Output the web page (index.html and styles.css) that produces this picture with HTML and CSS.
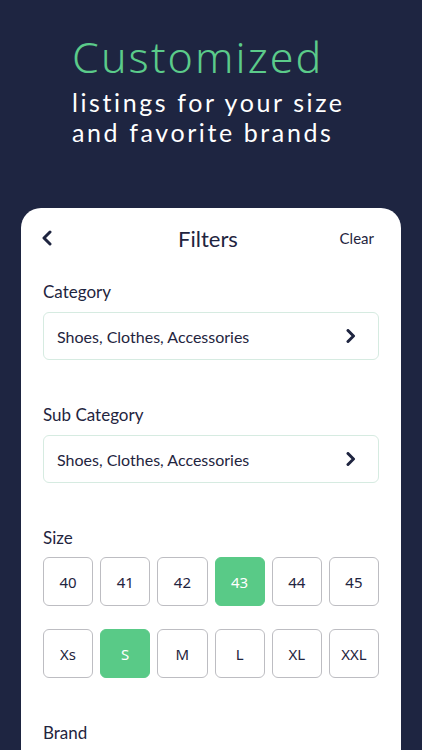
FILE: index.html
```html
<!DOCTYPE html>
<html lang="en">
<head>
<meta charset="utf-8">
<title>Filters</title>
<link rel="stylesheet" href="styles.css">
</head>
<body>
<header class="hero">
  <h1 class="hero-title">Customized</h1>
  <p class="hero-sub"><span class="line">listings for your size</span><span class="line">and favorite brands</span></p>
</header>
<main class="card">
  <div class="topbar">
    <span class="back"><svg width="12" height="16" viewBox="0 0 12 16"><path d="M9 2 L3 8 L9 14" fill="none" stroke="#1f2540" stroke-width="3" stroke-linecap="round" stroke-linejoin="round"/></svg></span>
    <span class="title">Filters</span>
    <span class="clear">Clear</span>
  </div>

  <section class="section">
    <div class="label">Category</div>
    <div class="select">
      <span>Shoes, Clothes, Accessories</span>
      <svg width="12" height="14" viewBox="0 0 12 14"><path d="M3 1.5 L8.5 7 L3 12.5" fill="none" stroke="#1f2540" stroke-width="3" stroke-linecap="round" stroke-linejoin="round"/></svg>
    </div>
  </section>

  <section class="section">
    <div class="label">Sub Category</div>
    <div class="select">
      <span>Shoes, Clothes, Accessories</span>
      <svg width="12" height="14" viewBox="0 0 12 14"><path d="M3 1.5 L8.5 7 L3 12.5" fill="none" stroke="#1f2540" stroke-width="3" stroke-linecap="round" stroke-linejoin="round"/></svg>
    </div>
  </section>

  <section class="section">
    <div class="label">Size</div>
    <div class="sizes">
      <span class="size">40</span>
      <span class="size">41</span>
      <span class="size">42</span>
      <span class="size active">43</span>
      <span class="size">44</span>
      <span class="size">45</span>
    </div>
    <div class="sizes second">
      <span class="size">Xs</span>
      <span class="size active">S</span>
      <span class="size">M</span>
      <span class="size">L</span>
      <span class="size">XL</span>
      <span class="size">XXL</span>
    </div>
  </section>

  <section class="section">
    <div class="label">Brand</div>
  </section>
</main>
</body>
</html>
```

FILE: styles.css
```css
html, body {
  margin: 0;
  padding: 0;
}
body {
  background: #1e2541;
  width: 422px;
  height: 750px;
  overflow: hidden;
  display: flex;
  flex-direction: column;
  font-family: Lato, "Noto Sans", sans-serif;
  color: #1f2540;
}
.hero {
  padding: 32px 0 0 72px;
  height: 208px;
  box-sizing: border-box;
  flex: none;
}
.hero-title {
  margin: 0;
  font-family: "Noto Sans", Lato, sans-serif;
  font-weight: 300;
  font-size: 43px;
  line-height: 50px;
  color: #5bcb8a;
  letter-spacing: 2.1px;
}
.hero-sub {
  margin: 5px 0 0;
  font-family: Lato, "Noto Sans", sans-serif;
  font-weight: 400;
  font-size: 25px;
  line-height: 30px;
  color: #ffffff;
  letter-spacing: 2.6px;
}
.line {
  display: block;
  height: 30px;
}
.card {
  margin-left: 21px;
  width: 380px;
  flex: 1;
  background: #ffffff;
  border-radius: 20px 20px 0 0;
  padding: 10px 22px 0;
  box-sizing: border-box;
  overflow: hidden;
}
.topbar {
  height: 40px;
  display: flex;
  align-items: center;
  justify-content: space-between;
  position: relative;
}
.back {
  display: flex;
  align-items: center;
  margin-left: -2px;
}
.title {
  position: absolute;
  left: -6px;
  right: 0;
  text-align: center;
  font-size: 22px;
  pointer-events: none;
}
.clear {
  font-size: 15px;
  margin-right: 5px;
}
.section {
  margin-top: 23px;
}
.section + .section {
  margin-top: 44px;
}
.label {
  font-size: 17px;
  line-height: 22px;
  margin-bottom: 9px;
}
.select {
  height: 48px;
  box-sizing: border-box;
  border: 1px solid #d6ebe1;
  border-radius: 6px;
  display: flex;
  align-items: center;
  justify-content: space-between;
  padding: 0 21px 0 13px;
  font-size: 16px;
}
.sizes {
  display: grid;
  grid-template-columns: repeat(6, 1fr);
  gap: 7px;
  margin-top: -1px;
}
.sizes.second {
  margin-top: 23px;
}
.size {
  height: 49px;
  box-sizing: border-box;
  border: 1px solid #bdbdc2;
  border-radius: 6px;
  display: flex;
  align-items: center;
  justify-content: center;
  font-family: "Noto Sans", Lato, sans-serif;
  font-size: 15px;
}
.size.active {
  background: #59ca87;
  border-color: #59ca87;
  color: #ffffff;
}
```
